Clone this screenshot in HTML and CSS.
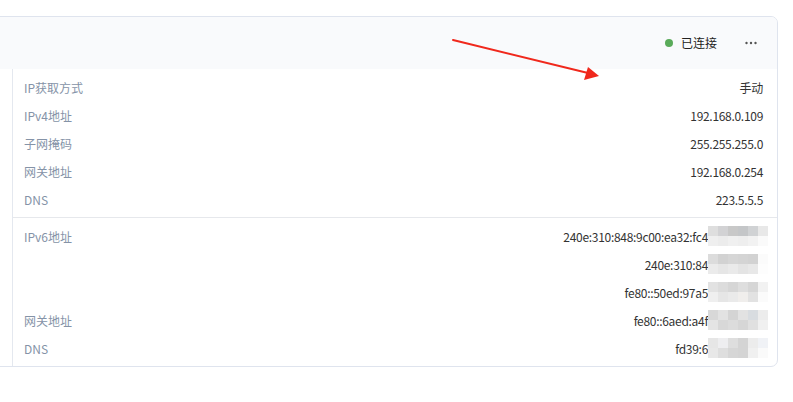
FILE: index.html
```html
<!DOCTYPE html>
<html lang="zh-CN">
<head>
<meta charset="utf-8">
<title>网络详情</title>
<link rel="stylesheet" href="styles.css">
</head>
<body>
<div class="card">
  <div class="card-head">
    <div class="status"><span class="dot"></span><span class="status-text">已连接</span></div>
    <span class="more"><svg width="12" height="4" viewBox="0 0 12 4"><circle cx="1.5" cy="2" r="1.2" fill="#555"/><circle cx="6" cy="2" r="1.2" fill="#555"/><circle cx="10.5" cy="2" r="1.2" fill="#555"/></svg></span>
  </div>
  <div class="card-body">
    <div class="detail">
      <div class="group">
        <div class="row"><span class="label">IP获取方式</span><span class="value">手动</span></div>
        <div class="row"><span class="label">IPv4地址</span><span class="value">192.168.0.109</span></div>
        <div class="row"><span class="label">子网掩码</span><span class="value">255.255.255.0</span></div>
        <div class="row"><span class="label">网关地址</span><span class="value">192.168.0.254</span></div>
        <div class="row"><span class="label">DNS</span><span class="value">223.5.5.5</span></div>
      </div>
      <div class="group sep">
        <div class="row"><span class="label">IPv6地址</span><span class="value">240e:310:848:9c00:ea32:fc4<span class="mosaic m1"><i></i><i></i><i></i><i></i><i></i><i></i><i></i><i></i><i></i><i></i><i></i><i></i></span></span></div>
        <div class="row"><span class="label"></span><span class="value">240e:310:84<span class="mosaic m2"><i></i><i></i><i></i><i></i><i></i><i></i><i></i><i></i><i></i><i></i><i></i><i></i></span></span></div>
        <div class="row"><span class="label"></span><span class="value">fe80::50ed:97a5<span class="mosaic m3"><i></i><i></i><i></i><i></i><i></i><i></i><i></i><i></i><i></i><i></i><i></i><i></i></span></span></div>
        <div class="row"><span class="label">网关地址</span><span class="value">fe80::6aed:a4f<span class="mosaic m4"><i></i><i></i><i></i><i></i><i></i><i></i><i></i><i></i><i></i><i></i><i></i><i></i></span></span></div>
        <div class="row"><span class="label">DNS</span><span class="value">fd39:6<span class="mosaic m5"><i></i><i></i><i></i><i></i><i></i><i></i><i></i><i></i><i></i><i></i><i></i><i></i></span></span></div>
      </div>
    </div>
  </div>
</div>
<svg class="arrow" width="793" height="402" viewBox="0 0 793 402">
  <line x1="453" y1="40" x2="588" y2="73" stroke="#f0281c" stroke-width="2" stroke-linecap="round"/>
  <polygon points="599,76 584,80 588,67" fill="#f0281c"/>
</svg>
</body>
</html>
```

FILE: styles.css
```css
html, body {
  margin: 0;
  padding: 0;
  background: #ffffff;
}
body {
  font-family: "Noto Sans CJK SC", "Liberation Sans", sans-serif;
  font-size: 12px;
  color: #333333;
  padding-top: 16px;
  overflow: hidden;
  position: relative;
  height: 402px;
  box-sizing: border-box;
}
.card {
  margin-left: -10px;
  margin-right: 15px;
  border: 1px solid #dfe4ee;
  border-radius: 7px;
  background: #ffffff;
  overflow: hidden;
}
.card-head {
  height: 52px;
  background: #f9fafc;
  display: flex;
  align-items: center;
  justify-content: flex-end;
  padding-right: 20px;
}
.status {
  display: flex;
  align-items: center;
}
.dot {
  width: 8px;
  height: 8px;
  border-radius: 50%;
  background: #5aab5a;
  margin-right: 8px;
}
.status-text {
  color: #222;
  line-height: 16px;
}
.more {
  margin-left: 28px;
  display: flex;
  align-items: center;
  width: 12px;
  height: 16px;
}
.card-body {
  padding-left: 21px;
}
.detail {
  border-left: 1px solid #e4e8ef;
}
.group {
  padding: 4px 0 4px;
}
.group.sep {
  border-top: 1px solid #e6e8ec;
}
.row {
  height: 28px;
  display: flex;
  align-items: center;
  justify-content: space-between;
  padding: 0 14px 0 11px;
}
.label {
  color: #8593a7;
}
.value {
  color: #333;
  display: flex;
  align-items: center;
  letter-spacing: -0.3px;
}
.mosaic {
  display: grid;
  grid-template-columns: repeat(6, 10px);
  grid-template-rows: repeat(2, 10px);
  width: 60px;
  margin-right: -5px;
}
.mosaic i {
  display: block;
  background: #e4e4e4;
}
.m1 i:nth-child(1) { background: #dedede; }
.m1 i:nth-child(2) { background: #d2d2d4; }
.m1 i:nth-child(3) { background: #c8c8c8; }
.m1 i:nth-child(4) { background: #c4c6c8; }
.m1 i:nth-child(5) { background: #d0d2d4; }
.m1 i:nth-child(6) { background: #e8e8e8; }
.m1 i:nth-child(7) { background: #efefef; }
.m1 i:nth-child(8) { background: #ececec; }
.m1 i:nth-child(9) { background: #f0f0f0; }
.m1 i:nth-child(10) { background: #eeeeee; }
.m1 i:nth-child(11) { background: #f2f2f2; }
.m1 i:nth-child(12) { background: #fafafa; }
.m2 i:nth-child(1) { background: #dcdcdc; }
.m2 i:nth-child(2) { background: #d2d2d2; }
.m2 i:nth-child(3) { background: #d6d6d6; }
.m2 i:nth-child(4) { background: #d4d4d4; }
.m2 i:nth-child(5) { background: #d2d2d2; }
.m2 i:nth-child(6) { background: #fbfbfb; }
.m2 i:nth-child(7) { background: #ebebeb; }
.m2 i:nth-child(8) { background: #e6e6e6; }
.m2 i:nth-child(9) { background: #eaeaea; }
.m2 i:nth-child(10) { background: #e4e4e4; }
.m2 i:nth-child(11) { background: #e8e8e8; }
.m2 i:nth-child(12) { background: #fdfdfd; }
.m3 i:nth-child(1) { background: #e2e2e2; }
.m3 i:nth-child(2) { background: #dcdcdc; }
.m3 i:nth-child(3) { background: #d6d6d6; }
.m3 i:nth-child(4) { background: #dedede; }
.m3 i:nth-child(5) { background: #d6d6d6; }
.m3 i:nth-child(6) { background: #f2f2f2; }
.m3 i:nth-child(7) { background: #efefef; }
.m3 i:nth-child(8) { background: #e6e6e6; }
.m3 i:nth-child(9) { background: #eaeaea; }
.m3 i:nth-child(10) { background: #f0eeec; }
.m3 i:nth-child(11) { background: #e2e2e2; }
.m3 i:nth-child(12) { background: #fbfbfb; }
.m4 i:nth-child(1) { background: #d8d8d8; }
.m4 i:nth-child(2) { background: #e2e2e2; }
.m4 i:nth-child(3) { background: #d4d4d4; }
.m4 i:nth-child(4) { background: #e2e2e2; }
.m4 i:nth-child(5) { background: #d8dce0; }
.m4 i:nth-child(6) { background: #ececec; }
.m4 i:nth-child(7) { background: #e4e4e4; }
.m4 i:nth-child(8) { background: #d8d8d8; }
.m4 i:nth-child(9) { background: #dcdcdc; }
.m4 i:nth-child(10) { background: #d6d6d6; }
.m4 i:nth-child(11) { background: #e0e0e0; }
.m4 i:nth-child(12) { background: #f0f0f0; }
.m5 i:nth-child(1) { background: #e6e6e6; }
.m5 i:nth-child(2) { background: #eeeef0; }
.m5 i:nth-child(3) { background: #dedede; }
.m5 i:nth-child(4) { background: #d4d4d4; }
.m5 i:nth-child(5) { background: #ececec; }
.m5 i:nth-child(6) { background: #f0f2f6; }
.m5 i:nth-child(7) { background: #e8e8e8; }
.m5 i:nth-child(8) { background: #dedede; }
.m5 i:nth-child(9) { background: #d6d6d6; }
.m5 i:nth-child(10) { background: #d4d4d4; }
.m5 i:nth-child(11) { background: #f0f0f0; }
.m5 i:nth-child(12) { background: #fafafa; }
.arrow {
  position: absolute;
  left: 0;
  top: 0;
  pointer-events: none;
}
```
